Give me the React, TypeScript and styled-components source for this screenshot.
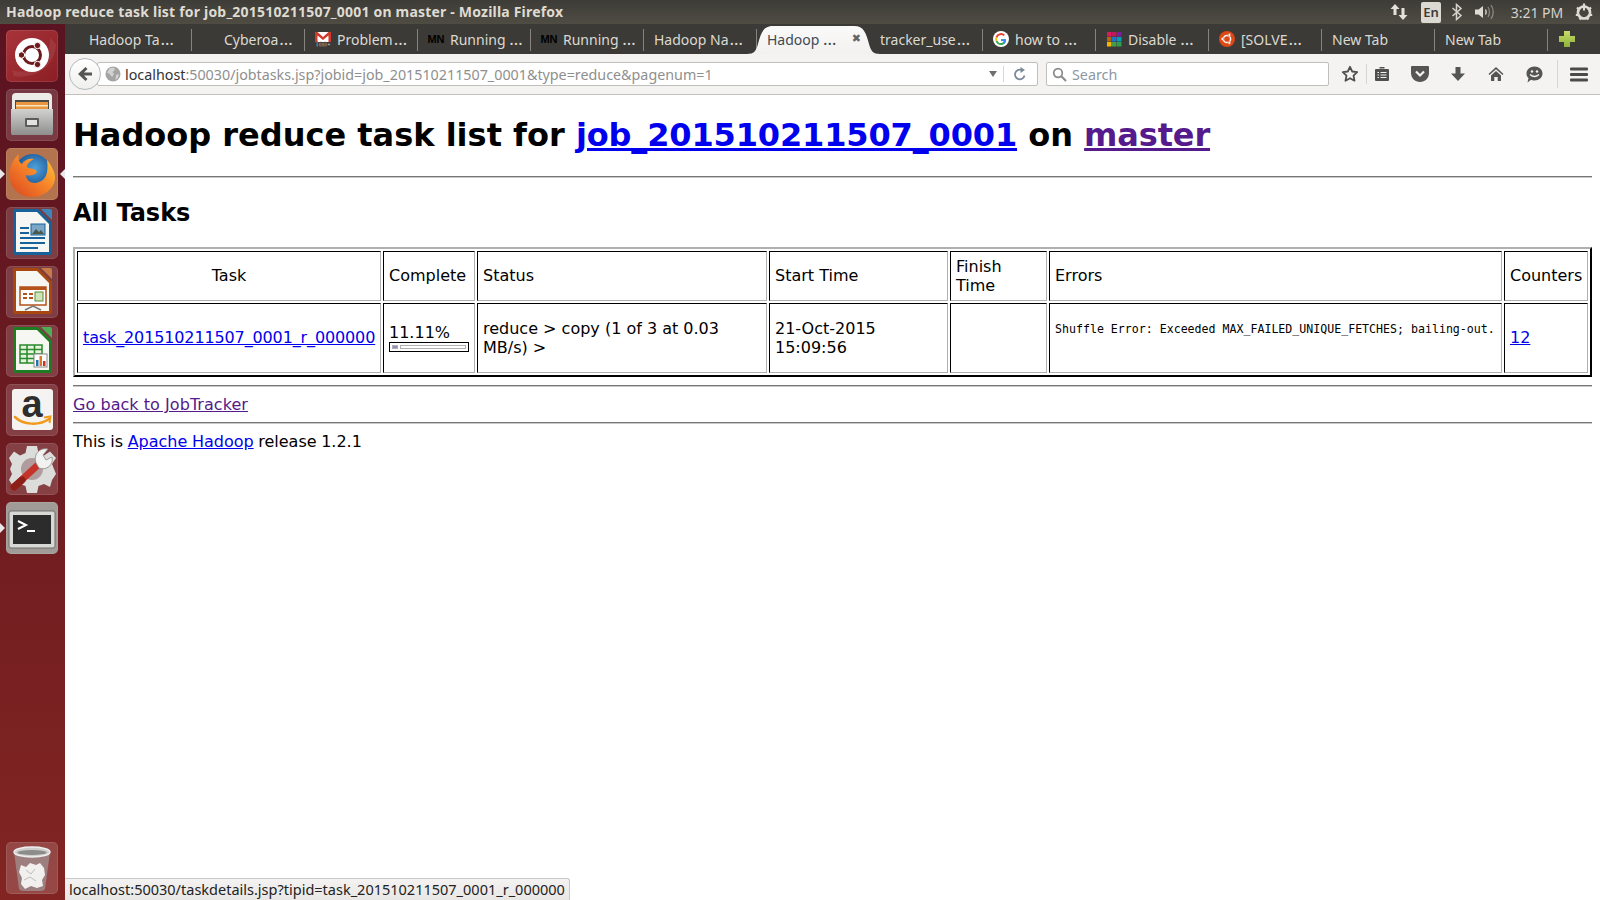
import styled, { createGlobalStyle } from "styled-components";

const UI_FONT = `"Noto Sans", "Open Sans", sans-serif`;

const GlobalStyle = createGlobalStyle`
  html, body {
    margin: 0;
    padding: 0;
    height: 100%;
    overflow: hidden;
    background: #fff;
  }
`;

function GmailIcon() {
  return (
    <svg width="16" height="16" viewBox="0 0 16 16">
      <rect x="0" y="1" width="16" height="10" fill="#fff" />
      <path d="M0 1h2.500L8 6l5.500-5H16v10h-2.500V4.500L8 9 2.500 4.500V11H0z" fill="#d0392b" />
      <text x="8" y="16" textAnchor="middle" fontSize="7" fontWeight="700" fontFamily="Liberation Sans" fill="#fff" stroke="#000" strokeWidth="0.4">100+</text>
    </svg>
  );
}

function GoogleIcon() {
  return (
    <svg width="16" height="16" viewBox="0 0 16 16">
      <circle cx="8" cy="8" r="8" fill="#fff" />
      <path d="M13 8.200H8v1.900h2.900c-.4 1.200-1.500 2-2.900 2a3.900 3.900 0 0 1-3.700-2.700L2.700 10.600A5.700 5.700 0 0 0 8 14c3.300 0 5.400-2.500 5-5.800z" fill="#34a853" />
      <path d="M4.300 9.400a4 4 0 0 1 0-2.700L2.700 5.400a5.800 5.800 0 0 0 0 5.200z" fill="#fbbc05" />
      <path d="M8 4.100c1 0 1.900.4 2.600 1l1.400-1.400A5.800 5.800 0 0 0 2.700 5.400l1.600 1.300A3.900 3.900 0 0 1 8 4.100z" fill="#ea4335" />
      <path d="M13 8.200H8v1.900h2.900c-.2.600-.6 1.200-1.100 1.500l1.500 1.200c1.400-1.200 2.100-3 1.700-4.600z" fill="#4285f4" />
    </svg>
  );
}

function DisableIcon() {
  const colors = ["#d81b60", "#c2185b", "#7b1fa2", "#b3660a", "#1976d2", "#00a0b0", "#f4b400", "#43a047", "#2e9e4f"];
  return (
    <svg width="15" height="15" viewBox="0 0 15 15">
      {colors.map((c, i) => (
        <rect key={c + i} x={(i % 3) * 5} y={Math.floor(i / 3) * 5} width="4.500" height="4.500" fill={c} />
      ))}
    </svg>
  );
}

function UbuntuTabIcon() {
  return (
    <svg width="16" height="16" viewBox="0 0 16 16">
      <circle cx="8" cy="8" r="8" fill="#dd4814" />
      <circle cx="8" cy="8" r="3.600" fill="none" stroke="#fff" strokeWidth="1.500" />
      <circle cx="3.400" cy="8" r="1.400" fill="#fff" stroke="#dd4814" strokeWidth="0.500" />
      <circle cx="10.400" cy="4" r="1.400" fill="#fff" stroke="#dd4814" strokeWidth="0.500" />
      <circle cx="10.400" cy="12" r="1.400" fill="#fff" stroke="#dd4814" strokeWidth="0.500" />
    </svg>
  );
}

const MnIcon = styled.span`
  display: block;
  flex: none;
  font: 700 11px "Liberation Sans", sans-serif;
  color: #000;
`;

const TabShapeSvg = styled.svg`
  position: absolute;
  left: -10px;
  bottom: 0;
`;

function ActiveTabShape() {
  return (
    <TabShapeSvg width="133" height="28" viewBox="0 0 133 28">
      <defs>
        <linearGradient id="activeTab" x1="0" y1="0" x2="0" y2="1">
          <stop offset="0" stopColor="#fbfafa" />
          <stop offset="1" stopColor="#f2f1ef" />
        </linearGradient>
      </defs>
      <path
        d="M0 28C7 28 9 25 11 18 14 7 16 0 26 0H107C117 0 119 7 122 18 124 25 126 28 133 28Z"
        fill="url(#activeTab)"
      />
    </TabShapeSvg>
  );
}

function PlusIcon() {
  return (
    <svg width="18" height="18" viewBox="0 0 18 18">
      <defs>
        <linearGradient id="plus" x1="0" y1="0" x2="0" y2="1">
          <stop offset="0" stopColor="#c8dc6a" />
          <stop offset="1" stopColor="#8cb33a" />
        </linearGradient>
      </defs>
      <path d="M6 1h6v5h5v6h-5v5H6v-5H1V6h5z" fill="url(#plus)" />
    </svg>
  );
}

function UbuntuLauncher() {
  return (
    <svg width="52" height="52" viewBox="0 0 52 52">
      <path d="M6 40C22 46 44 34 44 8L50 14C50 36 28 50 8 46z" fill="#ffffff" opacity="0.08" />
      <circle cx="26" cy="25" r="17" fill="#fff" />
      <circle cx="26" cy="25" r="8.500" fill="none" stroke="#6e1a1c" strokeWidth="3" />
      <circle cx="15.500" cy="25" r="3.200" fill="#6e1a1c" stroke="#fff" />
      <circle cx="31.500" cy="15.500" r="3.200" fill="#6e1a1c" stroke="#fff" />
      <circle cx="31.500" cy="34.500" r="3.200" fill="#6e1a1c" stroke="#fff" />
    </svg>
  );
}

function FilesLauncher() {
  return (
    <svg width="52" height="52" viewBox="0 0 52 52">
      <defs>
        <linearGradient id="cab" x1="0" y1="0" x2="0" y2="1">
          <stop offset="0" stopColor="#d2d2d0" />
          <stop offset="1" stopColor="#8e8e8c" />
        </linearGradient>
      </defs>
      <path d="M6 8Q6 4 10 4H42Q46 4 46 8V46H6z" fill="#ecebe8" />
      <rect x="9" y="11" width="34" height="10" fill="#4c4a46" />
      <rect x="10" y="13" width="32" height="8" fill="#e9963f" />
      <rect x="10" y="16" width="32" height="1.500" fill="#fbe3bf" />
      <path d="M5 20H47V44Q47 46 45 46H7Q5 46 5 44z" fill="url(#cab)" />
      <rect x="19" y="29" width="14" height="9" rx="1" fill="#5c5c5a" />
      <rect x="21" y="31" width="10" height="5" fill="#e2e2e0" />
    </svg>
  );
}

function FirefoxLauncher() {
  return (
    <svg width="52" height="52" viewBox="0 0 52 52">
      <defs>
        <radialGradient id="globe" cx="0.55" cy="0.4" r="0.6">
          <stop offset="0" stopColor="#4fa3dc" />
          <stop offset="1" stopColor="#144a8c" />
        </radialGradient>
        <linearGradient id="flame" x1="1" y1="0" x2="0" y2="1">
          <stop offset="0" stopColor="#ffd23a" />
          <stop offset="0.45" stopColor="#f7862a" />
          <stop offset="1" stopColor="#d9431e" />
        </linearGradient>
      </defs>
      <circle cx="27" cy="24" r="18" fill="url(#globe)" />
      <path
        d="M26 49C11 49 3 37 3.500 25 4 17 8 10 13 6 11.500 11 13 14 16 16 18 12 23 10 28 11 24 13 21 16 21 19 23 21 30 20 31 24 28 28 23 28 20 27 20 33 27 37 33 34 39 32 43 26 41 12 46 18 50 26 49 32 47 42 37 49 26 49Z"
        fill="url(#flame)"
      />
    </svg>
  );
}

function DocLauncher({ border, fold, kind }: { border: string; fold: string; kind: "writer" | "impress" | "calc" }) {
  return (
    <svg width="52" height="52" viewBox="0 0 52 52">
      <path d="M7 2H32L46 16V46Q46 48 44 48H9Q7 48 7 46z" fill={border} />
      <path d="M10 5H31L43 17V45H10z" fill="#f6f6f2" />
      <path d="M35 2H44Q46 2 46 4V13z" fill={fold} />
      {kind === "writer" && (
        <>
          <rect x="14" y="20" width="9" height="2" fill="#17629a" />
          <rect x="14" y="25" width="9" height="2" fill="#17629a" />
          <rect x="14" y="30" width="25" height="2" fill="#17629a" />
          <rect x="14" y="35" width="25" height="2" fill="#17629a" />
          <rect x="14" y="40" width="18" height="2" fill="#17629a" />
          <rect x="25" y="17" width="14" height="11" fill="#7ba6c6" stroke="#17629a" />
          <path d="M26 27l4-5 3 3 2-2 3 4z" fill="#4c5a48" />
        </>
      )}
      {kind === "impress" && (
        <>
          <rect x="14" y="21" width="26" height="18" fill="#fff" stroke="#b4521a" strokeWidth="1.500" />
          <rect x="14" y="21" width="26" height="3" fill="#b4521a" />
          <rect x="17" y="27" width="4" height="2" fill="#b4521a" />
          <rect x="23" y="27" width="4" height="2" fill="#b4521a" />
          <rect x="17" y="31" width="4" height="2" fill="#b4521a" />
          <rect x="23" y="31" width="4" height="2" fill="#b4521a" />
          <rect x="29" y="26" width="8" height="9" fill="#cfe4b8" stroke="#5a8a3a" />
          <path d="M19 44l8-4 8 4" fill="none" stroke="#777" strokeWidth="1.500" />
        </>
      )}
      {kind === "calc" && (
        <>
          <path
            d="M14 20H36V38H14zM14 24.500H36M14 29H36M14 33.500H36M21 20V38M28.500 20V38"
            fill="#e8f3dc"
            stroke="#27892c"
            strokeWidth="1.500"
          />
          <rect x="28" y="29" width="13" height="13" fill="#fff" stroke="#888" />
          <rect x="30" y="35" width="2.500" height="6" fill="#2a6fb0" />
          <rect x="33.500" y="31" width="2.500" height="10" fill="#e0762a" />
          <rect x="37" y="36" width="2.500" height="5" fill="#c8302a" />
        </>
      )}
    </svg>
  );
}

function AmazonLauncher() {
  return (
    <svg width="52" height="52" viewBox="0 0 52 52">
      <rect x="6" y="5" width="41" height="41" rx="3" fill="#f4f3f1" />
      <text x="26" y="33" textAnchor="middle" fontSize="38" fontWeight="700" fontFamily="Liberation Sans" fill="#2d2d2d">a</text>
      <path d="M9 33C17 41 33 42 43 35" fill="none" stroke="#f09a1c" strokeWidth="2.500" strokeLinecap="round" />
      <path d="M38 33.500L44.500 32.500 43.500 39" fill="none" stroke="#f09a1c" strokeWidth="2" />
    </svg>
  );
}

function SettingsLauncher() {
  return (
    <svg width="52" height="52" viewBox="0 0 52 52">
      <path
        d="M21 3H31L32.500 10 38 12.500 44 8.500 50 15 46 21 48 26 50 31 46 37 44 44 38 41 32.500 43 31 50H21L19.500 43 14 41 8 44.500 3 37 6 31 4 26 6 21 3 15 8 8.500 14 12.500 19.500 10z"
        fill="#dcdcda"
      />
      <circle cx="26" cy="26" r="11" fill="#b09c9c" />
      <path d="M8 44L34 20" stroke="#c4342a" strokeWidth="7" strokeLinecap="round" />
      <path d="M8 44L16 37" stroke="#8c1f18" strokeWidth="7" strokeLinecap="round" />
      <path d="M30 20C27 12 33 4 42 6L37 12 40 17 46 14C48 22 40 28 33 25z" fill="#f2f2f0" stroke="#8a8a88" strokeWidth="0.800" />
    </svg>
  );
}

function TerminalLauncher() {
  return (
    <svg width="52" height="52" viewBox="0 0 52 52">
      <rect x="3" y="9" width="46" height="37" rx="2" fill="#d8d8d4" stroke="#6f6f6f" />
      <rect x="7" y="13" width="38" height="29" fill="#2c2c2c" />
      <path d="M12 19l8 4-8 4" fill="none" stroke="#fff" strokeWidth="2" />
      <rect x="21" y="28" width="8" height="2" fill="#fff" />
    </svg>
  );
}

function TrashLauncher() {
  return (
    <svg width="52" height="52" viewBox="0 0 52 52">
      <path d="M8 10L13 47Q14 49 17 49H35Q38 49 39 47L44 10z" fill="#9d8a88" opacity="0.85" />
      <ellipse cx="26" cy="10" rx="18" ry="5" fill="#cfcfcd" stroke="#eee" strokeWidth="1.500" />
      <ellipse cx="26" cy="10.500" rx="14.500" ry="2.500" fill="#8c8c8a" />
      <path
        d="M13 30L15 23 20 25 24 21 30 23 34 21 38 26 39 33 36 38 37 44 31 46 25 44 19 47 15 42 16 36z"
        fill="#f1f0ee"
      />
      <path d="M20 28l5 4 4-5M18 38l6-3 6 4" fill="none" stroke="#bdbdbb" />
    </svg>
  );
}

function BackArrow() {
  return (
    <svg width="18" height="18" viewBox="0 0 18 18">
      <path d="M9.500 2L2 9l7.500 7 2-2L8 10.500h8v-3H8L11.500 4z" fill="#555" />
    </svg>
  );
}

function GlobeIcon() {
  return (
    <svg width="16" height="16" viewBox="0 0 16 16">
      <circle cx="8" cy="8" r="7.500" fill="#a4a4a4" />
      <path d="M5 2L9 1.500 10 4 7.500 6 9 8 7 11 4.500 8 2 6.500zM11 9l3-1-1 4-2.500 2z" fill="#d2d2d2" />
    </svg>
  );
}

function ReloadIcon() {
  return (
    <svg width="14" height="14" viewBox="0 0 14 14">
      <path d="M11.500 8.500A4.800 4.800 0 1 1 8.500 3" fill="none" stroke="#7b8a9a" strokeWidth="1.800" />
      <path d="M7.500 0l4.500 3-4.500 3z" fill="#7b8a9a" />
    </svg>
  );
}

function SearchIcon() {
  return (
    <svg width="15" height="15" viewBox="0 0 15 15">
      <circle cx="6" cy="6" r="4.300" fill="none" stroke="#8a8a8a" strokeWidth="1.700" />
      <path d="M9.300 9.300L14 14" stroke="#8a8a8a" strokeWidth="2" />
    </svg>
  );
}

function StarIcon() {
  return (
    <svg width="18" height="18" viewBox="0 0 18 18">
      <path d="M9 1.800l2.200 4.700 5 .6-3.700 3.500 1 5.100L9 13.200l-4.500 2.500 1-5.100L1.800 7.100l5-.6z" fill="none" stroke="#4f4f4f" strokeWidth="1.800" strokeLinejoin="round" />
    </svg>
  );
}

function ReadingListIcon() {
  return (
    <svg width="16" height="16" viewBox="0 0 16 16">
      <path d="M5.500 2.500h5V1H5.500zM2 3h12q1 0 1 1v10q0 1-1 1H2q-1 0-1-1V4q0-1 1-1z" fill="#4f4f4f" />
      <path d="M3.500 6.500h1.500M6.500 6.500h6M3.500 9h1.500M6.500 9h6M3.500 11.500h1.500M6.500 11.500h6" stroke="#f4f3f1" strokeWidth="1.200" />
    </svg>
  );
}

function PocketIcon() {
  return (
    <svg width="18" height="16" viewBox="0 0 18 16">
      <path d="M1 0H17Q18 0 18 1V7C18 12 14 16 9 16 4 16 0 12 0 7V1Q0 0 1 0z" fill="#555" />
      <path d="M5 5.500L9 9.500 13 5.500" fill="none" stroke="#f4f3f1" strokeWidth="2.200" />
    </svg>
  );
}

function DownloadIcon() {
  return (
    <svg width="16" height="16" viewBox="0 0 16 16">
      <path d="M5.500 1h5v6.500H15L8 15 1 7.500h4.500z" fill="#555" />
    </svg>
  );
}

function HomeIcon() {
  return (
    <svg width="16" height="16" viewBox="0 0 16 16">
      <path d="M8 1L0.500 8l1 1L8 3.200 14.500 9l1-1z" fill="#555" />
      <path d="M3 9.500L8 5l5 4.500V15H9.700v-4H6.300v4H3z" fill="#555" />
    </svg>
  );
}

function ChatIcon() {
  return (
    <svg width="17" height="17" viewBox="0 0 17 17">
      <path d="M8.500 0.500C13 0.500 16.500 3.500 16.500 7.500S13 14.500 8.500 14.500C7 14.500 6 14.200 5 13.800L1.500 16.500 2.500 12C1 10.800.5 9.200.5 7.500.5 3.500 4 .5 8.500.5z" fill="#555" />
      <circle cx="6" cy="5.500" r="1.200" fill="#f4f3f1" />
      <circle cx="11" cy="5.500" r="1.200" fill="#f4f3f1" />
      <path d="M4 8.500Q8.500 12.500 13 8.500" fill="none" stroke="#f4f3f1" strokeWidth="1.300" />
    </svg>
  );
}

function NetworkIcon() {
  return (
    <svg width="18" height="18" viewBox="0 0 18 18">
      <path d="M5 1L9.500 6H6.500V12H3.500V6H.5z" fill="#e4e1da" />
      <path d="M13 17L8.500 12H11.500V5H14.500V12H17.500z" fill="#e4e1da" />
    </svg>
  );
}

function BluetoothIcon() {
  return (
    <svg width="12" height="18" viewBox="0 0 12 18">
      <path d="M1.500 5L10 12.500 5.500 16.500V1.500L10 5.500 1.500 13" fill="none" stroke="#d6d3cc" strokeWidth="1.500" />
    </svg>
  );
}

function SoundIcon() {
  return (
    <svg width="22" height="18" viewBox="0 0 22 18">
      <path d="M1 6.500H4.500L9 3V15L4.500 11.500H1z" fill="#dfdbd2" />
      <path d="M11.500 6.500Q13 9 11.500 11.500" fill="none" stroke="#dfdbd2" strokeWidth="1.400" />
      <path d="M14 4Q17 9 14 14M17 2Q21.500 9 17 16" fill="none" stroke="#8a8880" strokeWidth="1.300" />
    </svg>
  );
}

function GearIcon() {
  return (
    <svg width="18" height="18" viewBox="0 0 18 18">
      <path d="M9 3.500a6 6 0 1 1-.01 0z" fill="none" stroke="#dfdbd2" strokeWidth="2.600" />
      <path d="M9 .5v7M2 4.500l2 2M16 4.500l-2 2M.8 12h2.500M17.200 12h-2.500M4.500 16.500l1.200-1.500M13.500 16.500L12.300 15" stroke="#dfdbd2" strokeWidth="2.200" />
    </svg>
  );
}

function HamburgerIcon() {
  return (
    <svg width="18" height="15" viewBox="0 0 18 15">
      <rect x="0" y="0.500" width="18" height="3" rx="1" fill="#4a4a4a" />
      <rect x="0" y="6" width="18" height="3" rx="1" fill="#4a4a4a" />
      <rect x="0" y="11.500" width="18" height="3" rx="1" fill="#4a4a4a" />
    </svg>
  );
}

const Screen = styled.div`
  width: 1600px;
  height: 900px;
  display: flex;
  flex-direction: column;
  position: relative;
  overflow: hidden;
`;

const TopPanel = styled.header`
  height: 24px;
  flex: none;
  display: flex;
  align-items: center;
  padding: 0 6px;
  background: linear-gradient(#3d3c37, #4f4c43);
  color: #dfdbd2;
  font-family: ${UI_FONT};
`;

const WindowTitle = styled.div`
  flex: 1;
  padding-bottom: 2px;
  font-size: 14px;
  font-weight: 700;
  letter-spacing: 0.2px;
  white-space: nowrap;
`;

const PanelItem = styled.div<{ $w: number; $ml: number }>`
  width: ${({ $w }) => $w}px;
  margin-left: ${({ $ml }) => $ml}px;
  display: flex;
  align-items: center;
  justify-content: center;
  white-space: nowrap;
`;

const LangBadge = styled(PanelItem)`
  height: 21px;
  border-radius: 2px;
  background: #dcd9d2;
  color: #3c3b37;
  font-size: 13px;
  font-weight: 600;
`;

const Clock = styled(PanelItem)`
  font-size: 14px;
  color: #d6d3cc;
`;

const Workspace = styled.div`
  flex: 1;
  display: flex;
  min-height: 0;
`;

const Launcher = styled.nav`
  width: 65px;
  flex: none;
  box-sizing: border-box;
  padding: 6px 0 6px 6px;
  display: flex;
  flex-direction: column;
  gap: 7px;
  background: linear-gradient(#5a1320, #822522);
`;

const Tile = styled.div<{ $bg?: string; $pip?: boolean; $end?: boolean }>`
  width: 52px;
  height: 52px;
  position: relative;
  border-radius: 5px;
  background: ${({ $bg }) => $bg || "rgba(255, 255, 255, 0.16)"};
  box-shadow: inset 0 0 0 1px rgba(255, 255, 255, 0.1);
  margin-top: ${({ $end }) => ($end ? "auto" : "0")};
  &::before {
    content: "";
    display: ${({ $pip }) => ($pip ? "block" : "none")};
    position: absolute;
    left: -6px;
    top: 21px;
    border: 5px solid transparent;
    border-left-color: #e8e8e8;
  }
  svg {
    display: block;
  }
`;

const RightPip = styled.span`
  position: absolute;
  right: -7px;
  top: 21px;
  border: 5px solid transparent;
  border-left: 0;
  border-right-color: #e8e8e8;
`;

const Browser = styled.div`
  flex: 1;
  min-width: 0;
  display: flex;
  flex-direction: column;
`;

const TabStrip = styled.div`
  height: 30px;
  flex: none;
  display: flex;
  padding-left: 14px;
  background: #3b3a36;
  font-family: ${UI_FONT};
`;

const Tab = styled.div<{ $active?: boolean }>`
  width: 113px;
  flex: none;
  box-sizing: border-box;
  position: relative;
  display: flex;
  align-items: center;
  gap: 6px;
  padding-left: 10px;
  font-size: 14px;
  white-space: nowrap;
  color: ${({ $active }) => ($active ? "#3f4a57" : "#dcd9d2")};
  &::after {
    content: "";
    display: ${({ $active }) => ($active ? "none" : "block")};
    position: absolute;
    right: 0;
    top: 5px;
    bottom: 3px;
    width: 1px;
    background: #85847e;
  }
`;

const TabLabel = styled.span`
  position: relative;
`;

const TabDots = styled.span<{ $wide: boolean }>`
  margin-left: ${({ $wide }) => ($wide ? 1 : 0)}px;
  font-size: 17px;
  line-height: 1;
`;

const TabIconSlot = styled.span`
  width: 16px;
  height: 16px;
  flex: none;
  display: flex;
  align-items: center;
  justify-content: center;
`;

const TabClose = styled.span`
  position: absolute;
  right: 9px;
  top: 8px;
  font: 700 11px "DejaVu Sans", sans-serif;
  color: #666;
`;

const NewTabSlot = styled.div`
  width: 38px;
  display: flex;
  align-items: center;
  justify-content: center;
`;

const NavBar = styled.div`
  height: 41px;
  flex: none;
  box-sizing: border-box;
  display: flex;
  align-items: center;
  padding-left: 4px;
  background: #f4f3f1;
  border-bottom: 1px solid #c4c1bb;
  font-family: ${UI_FONT};
`;

const BackButton = styled.button`
  width: 32px;
  height: 32px;
  flex: none;
  padding: 0;
  position: relative;
  z-index: 1;
  display: flex;
  align-items: center;
  justify-content: center;
  border: 1px solid #b4b9bf;
  border-radius: 50%;
  background: linear-gradient(#ffffff, #efefed);
`;

const Field = styled.div`
  height: 24px;
  flex: none;
  box-sizing: border-box;
  display: flex;
  align-items: center;
  background: #fff;
  border: 1px solid #bfbfbb;
  border-radius: 2px;
  font-size: 14.3px;
  white-space: nowrap;
`;

const UrlField = styled(Field)`
  width: 941px;
  margin-left: -4px;
  padding: 0 10px 0 7px;
  gap: 4px;
`;

const UrlText = styled.span`
  flex: 1;
  color: #8f8f8f;
  b {
    font-weight: 400;
    color: #333;
  }
`;

const DropArrow = styled.span`
  border: 4px solid transparent;
  border-top: 6px solid #6f6f6f;
  border-bottom: 0;
  margin-right: 2px;
`;

const FieldDivider = styled.span`
  width: 1px;
  height: 16px;
  background: #d8d8d4;
  margin-right: 5px;
`;

const SearchField = styled(Field)`
  width: 283px;
  margin-left: 8px;
  padding-left: 5px;
  gap: 5px;
  color: #8c97a3;
`;

const ToolButton = styled.div<{ $w: number; $ml?: number }>`
  width: ${({ $w }) => $w}px;
  margin-left: ${({ $ml }) => $ml || 0}px;
  flex: none;
  display: flex;
  align-items: center;
  justify-content: center;
`;

const ToolDivider = styled.span<{ $h: number; $ml?: number }>`
  width: 1px;
  height: ${({ $h }) => $h}px;
  flex: none;
  margin-left: ${({ $ml }) => $ml || 0}px;
  background: #d6d5d1;
`;

const Page = styled.main`
  flex: 1;
  box-sizing: border-box;
  padding: 0 8px;
  background: #fff;
  color: #000;
  font: 16px "DejaVu Sans", sans-serif;
  a {
    color: #0000ee;
  }
  a.visited {
    color: #551a8b;
  }
`;

const Heading = styled.h1`
  font-size: 32px;
  font-weight: 700;
  margin: 21.44px 0;
  a {
    letter-spacing: -0.14px;
  }
`;

const SubHeading = styled.h2`
  font-size: 24px;
  font-weight: 700;
  margin: 20.92px 0 20.5px;
`;

const Rule = styled.hr`
  margin: 8px 0;
  height: 0;
  border: 0;
  border-top: 1px solid #777;
  border-bottom: 1px solid #c8c8c8;
`;

const TaskTable = styled.table`
  width: 100%;
  table-layout: fixed;
  border-collapse: separate;
  border-spacing: 2px;
  border: 2px solid;
  border-color: #b0b0b0 #000 #000 #b0b0b0;
`;

const Cell = styled.td<{ $center?: boolean; $lift?: boolean }>`
  box-sizing: border-box;
  padding: 5px;
  padding-bottom: ${({ $lift }) => ($lift ? 7 : 5)}px;
  border: 1px solid;
  border-color: #000 #b0b0b0 #b0b0b0 #000;
  text-align: ${({ $center }) => ($center ? "center" : "left")};
  vertical-align: middle;
`;

const TaskLink = styled.a`
  letter-spacing: -0.13px;
`;

const HeadRow = styled.tr`
  height: 50px;
`;

const BodyRow = styled.tr`
  height: 70px;
`;

const ErrorText = styled.pre`
  margin: 0 0 18px;
  font: 11.6px "DejaVu Sans Mono", monospace;
  white-space: nowrap;
`;

const ProgressTrack = styled.div`
  width: 80px;
  height: 10px;
  box-sizing: border-box;
  display: flex;
  gap: 2px;
  padding: 2px;
  margin-bottom: 1px;
  border: 1px solid #000;
  background: #fff;
`;

const ProgressFill = styled.div`
  background: #8f8fc8;
  border: 1px solid #b0b0b0;
  box-sizing: border-box;
`;

const ProgressRest = styled.div`
  flex: 1;
  border: 1px solid #b0b0b0;
`;

const Paragraph = styled.p<{ $tight?: boolean }>`
  margin: 0;
  word-spacing: ${({ $tight }) => ($tight ? "-0.5px" : "0")};
  letter-spacing: ${({ $tight }) => ($tight ? "0" : "0.05px")};
`;

const StatusBar = styled.div`
  position: absolute;
  left: 65px;
  bottom: 0;
  height: 21px;
  padding: 0 4px;
  line-height: 21px;
  border: 1px solid #c8c8c6;
  border-width: 1px 1px 0 0;
  border-top-right-radius: 3px;
  background: linear-gradient(#f4f3f1, #e8e7e5);
  color: #222;
  font: 14.5px ${UI_FONT};
  white-space: nowrap;
`;

const columns = [304, 92, 290, 179, 97, 453, 84];

const tabs = [
  { label: "Hadoop Ta…" },
  { label: "Cyberoa…", icon: <span /> },
  { label: "Problem…", icon: <GmailIcon /> },
  { label: "Running …", icon: <MnIcon>MN</MnIcon> },
  { label: "Running …", icon: <MnIcon>MN</MnIcon> },
  { label: "Hadoop Na…" },
  { label: "Hadoop …", active: true },
  { label: "tracker_use…" },
  { label: "how to …", icon: <GoogleIcon /> },
  { label: "Disable …", icon: <DisableIcon /> },
  { label: "[SOLVE…", icon: <UbuntuTabIcon /> },
  { label: "New Tab" },
  { label: "New Tab" },
];

const progress = 11.11;

function TabText({ label }: { label: string }) {
  if (!label.endsWith("…")) return <TabLabel>{label}</TabLabel>;
  const text = label.slice(0, -1);
  return (
    <TabLabel>
      {text}
      <TabDots $wide={!text.endsWith(" ")}>…</TabDots>
    </TabLabel>
  );
}

function App() {
  return (
    <Screen>
      <GlobalStyle />
      <TopPanel>
        <WindowTitle>Hadoop reduce task list for job_201510211507_0001 on master - Mozilla Firefox</WindowTitle>
        <PanelItem $w={20} $ml={0}><NetworkIcon /></PanelItem>
        <LangBadge $w={20} $ml={12}>En</LangBadge>
        <PanelItem $w={20} $ml={6}><BluetoothIcon /></PanelItem>
        <PanelItem $w={24} $ml={6}><SoundIcon /></PanelItem>
        <Clock $w={52} $ml={14}>3:21 PM</Clock>
        <PanelItem $w={20} $ml={11}><GearIcon /></PanelItem>
      </TopPanel>
      <Workspace>
        <Launcher>
          <Tile $bg="linear-gradient(135deg, #a8343a, #8a1e24)"><UbuntuLauncher /></Tile>
          <Tile><FilesLauncher /></Tile>
          <Tile $bg="#b4734f" $pip>
            <FirefoxLauncher />
            <RightPip />
          </Tile>
          <Tile><DocLauncher border="#17629a" fold="#3f86b8" kind="writer" /></Tile>
          <Tile><DocLauncher border="#a8480f" fold="#c87a46" kind="impress" /></Tile>
          <Tile><DocLauncher border="#1e7d22" fold="#4fae55" kind="calc" /></Tile>
          <Tile><AmazonLauncher /></Tile>
          <Tile><SettingsLauncher /></Tile>
          <Tile $bg="#a09b97" $pip><TerminalLauncher /></Tile>
          <Tile $end><TrashLauncher /></Tile>
        </Launcher>
        <Browser>
          <TabStrip>
            {tabs.map((tab, i) => (
              <Tab key={i} $active={tab.active}>
                {tab.active && <ActiveTabShape />}
                {tab.icon && <TabIconSlot>{tab.icon}</TabIconSlot>}
                <TabText label={tab.label} />
                {tab.active && <TabClose>✖</TabClose>}
              </Tab>
            ))}
            <NewTabSlot><PlusIcon /></NewTabSlot>
          </TabStrip>
          <NavBar>
            <BackButton><BackArrow /></BackButton>
            <UrlField>
              <GlobeIcon />
              <UrlText><b>localhost</b>:50030/jobtasks.jsp?jobid=job_201510211507_0001&amp;type=reduce&amp;pagenum=1</UrlText>
              <DropArrow />
              <FieldDivider />
              <ReloadIcon />
            </UrlField>
            <SearchField><SearchIcon />Search</SearchField>
            <ToolButton $w={32} $ml={5}><StarIcon /></ToolButton>
            <ToolDivider $h={20} />
            <ToolButton $w={30}><ReadingListIcon /></ToolButton>
            <ToolButton $w={38} $ml={4}><PocketIcon /></ToolButton>
            <ToolButton $w={38}><DownloadIcon /></ToolButton>
            <ToolButton $w={38}><HomeIcon /></ToolButton>
            <ToolButton $w={38}><ChatIcon /></ToolButton>
            <ToolDivider $h={28} $ml={4} />
            <ToolButton $w={42}><HamburgerIcon /></ToolButton>
          </NavBar>
          <Page>
            <Heading>
              Hadoop reduce task list for <a href="#job">job_201510211507_0001</a> on <a className="visited" href="#master">master</a>
            </Heading>
            <Rule />
            <SubHeading>All Tasks</SubHeading>
            <TaskTable>
              <colgroup>
                {columns.map((w, i) => (
                  <col key={i} width={w} />
                ))}
              </colgroup>
              <tbody>
                <HeadRow>
                  <Cell $center $lift>Task</Cell>
                  <Cell $lift>Complete</Cell>
                  <Cell $lift>Status</Cell>
                  <Cell $lift>Start Time</Cell>
                  <Cell>Finish Time</Cell>
                  <Cell $lift>Errors</Cell>
                  <Cell $lift>Counters</Cell>
                </HeadRow>
                <BodyRow>
                  <Cell $lift><TaskLink href="#task">task_201510211507_0001_r_000000</TaskLink></Cell>
                  <Cell>
                    11.11%
                    <ProgressTrack>
                      <ProgressFill style={{ width: `${progress * 0.72}%` }} />
                      <ProgressRest />
                    </ProgressTrack>
                  </Cell>
                  <Cell>reduce &gt; copy (1 of 3 at 0.03 MB/s) &gt;</Cell>
                  <Cell>21-Oct-2015 15:09:56</Cell>
                  <Cell />
                  <Cell><ErrorText>Shuffle Error: Exceeded MAX_FAILED_UNIQUE_FETCHES; bailing-out.</ErrorText></Cell>
                  <Cell $lift><a href="#counters">12</a></Cell>
                </BodyRow>
              </tbody>
            </TaskTable>
            <Rule />
            <Paragraph><a className="visited" href="#jobtracker">Go back to JobTracker</a></Paragraph>
            <Rule />
            <Paragraph $tight>This is <a href="#hadoop">Apache Hadoop</a> release 1.2.1</Paragraph>
          </Page>
        </Browser>
      </Workspace>
      <StatusBar>localhost:50030/taskdetails.jsp?tipid=task_201510211507_0001_r_000000</StatusBar>
    </Screen>
  );
}

export default App;
